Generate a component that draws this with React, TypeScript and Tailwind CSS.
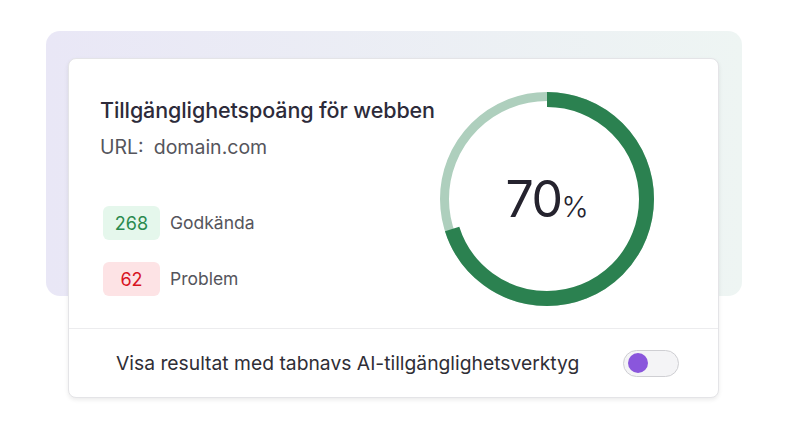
import React from "react";

export default function App() {
  const r = 99.5;
  const c = 2 * Math.PI * r;
  const dash = c * 0.7;
  return (
    <div className="w-[799px] h-[443px] bg-white relative overflow-hidden" style={{ fontFamily: "Inter, 'Noto Sans', sans-serif" }}>
      <div className="absolute left-[46px] top-[31px] w-[696px] h-[265px] rounded-[14px] bg-gradient-to-r from-[#e9e7f6] to-[#eef5f3]" />
      <div className="absolute left-[68px] top-[58px] w-[651px] h-[340px] bg-white rounded-[8px] border border-[#e4e4e7] shadow-[0_2px_4px_rgba(0,0,0,0.08)] flex flex-col">
        <div className="flex justify-between h-[270px] border-b border-[#ececee]">
          <div className="flex flex-col pl-[31px] pt-[36px]">
            <div className="text-[21.5px] leading-[30px] font-medium text-[#2d2b3a] tracking-[-0.1px]">Tillgänglighetspoäng för webben</div>
            <div className="mt-[8px] text-[19.5px] leading-[28px] text-[#55555c]">URL:<span className="ml-[10px]">domain.com</span></div>
            <div className="mt-[45px] ml-[3px] flex items-center gap-[10px]">
              <div className="w-[57px] h-[34px] rounded-[6px] bg-[#e5f7ec] text-[#2b8a4e] text-[18px] flex items-center justify-center">268</div>
              <div className="text-[17.5px] text-[#55555c]">Godkända</div>
            </div>
            <div className="mt-[22px] ml-[3px] flex items-center gap-[10px]">
              <div className="w-[57px] h-[34px] rounded-[6px] bg-[#fde3e5] text-[#d8141f] text-[18px] flex items-center justify-center">62</div>
              <div className="text-[17.5px] text-[#55555c]">Problem</div>
            </div>
          </div>
          <div className="mt-[32px] mr-[63px] relative w-[216px] h-[216px]">
            <svg width="216" height="216" viewBox="0 0 216 216">
              <circle cx="108" cy="108" r="102.5" fill="none" stroke="#aecfbd" strokeWidth="9" />
              <circle
                cx="108"
                cy="108"
                r={r}
                fill="none"
                stroke="#2b8150"
                strokeWidth="15"
                strokeDasharray={`${dash} ${c}`}
                transform="rotate(-90 108 108)"
              />
            </svg>
            <div className="absolute inset-0 flex items-center justify-center">
              <span className="text-[50px] leading-none text-[#25232e] font-normal tracking-[-1.5px]">70</span>
              <span className="text-[29px] leading-none text-[#25232e] font-light mt-[14px]">%</span>
            </div>
          </div>
        </div>
        <div className="flex-1 flex items-center justify-between pl-[47px] pr-[39px]">
          <div className="text-[19.3px] text-[#2f2e36]">Visa resultat med tabnavs AI-tillgänglighetsverktyg</div>
          <div className="w-[56px] h-[27px] rounded-full bg-[#f4f4f6] border border-[#cfcfd3] flex items-center pl-[4px]">
            <div className="w-[20px] h-[20px] rounded-full bg-[#8a56dc]" />
          </div>
        </div>
      </div>
    </div>
  );
}
